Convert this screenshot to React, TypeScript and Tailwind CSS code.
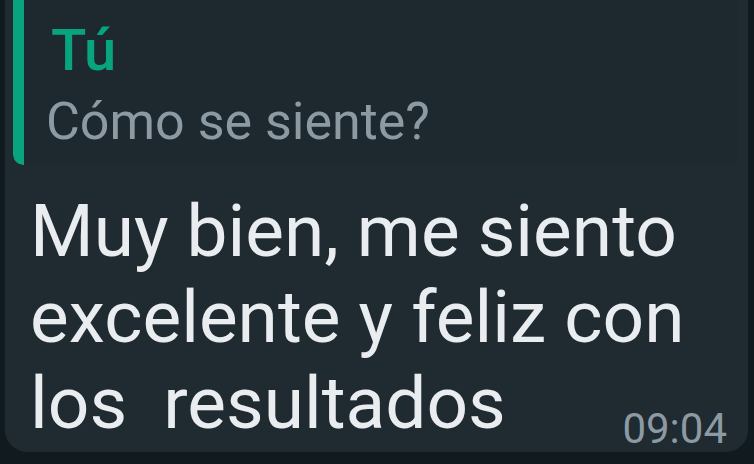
export default function App() {
  return (
    <div
      className="w-[754px] h-[464px] overflow-hidden bg-[#111a1f]"
      style={{ fontFamily: "Roboto, 'Noto Sans', sans-serif" }}
    >
      <div className="ml-[5px] w-[743px] h-[452px] bg-[#1f2a31] rounded-b-[22px] pl-[8px] pr-[10px]">
        {/* quoted message */}
        <div className="flex w-[725px] h-[165px] rounded-bl-[10px] rounded-br-[8px] bg-[#1d282f] overflow-hidden">
          <div className="w-[11px] bg-[#08a47f] rounded-bl-[10px]" />
          <div className="pl-[27px] pt-[21px]">
            <div className="text-[58px] leading-[58px] font-medium text-[#08a47f]">Tú</div>
            <div className="mt-[17px] -ml-[5px] text-[52px] leading-[52px] text-[#8c9aa3]">Cómo se siente?</div>
          </div>
        </div>

        {/* message body */}
        <div className="mt-[23px] pl-[17px] text-[73px] leading-[86px] text-[#e9edef]">
          <div>Muy bien, me siento</div>
          <div>excelente y feliz con</div>
          <div className="flex items-end justify-between">
            <span className="whitespace-pre mb-[4px]">los  resultados</span>
            <span className="text-[42px] leading-[42px] text-[#8c9aa3] mr-[11px]">09:04</span>
          </div>
        </div>
      </div>
    </div>
  );
}
